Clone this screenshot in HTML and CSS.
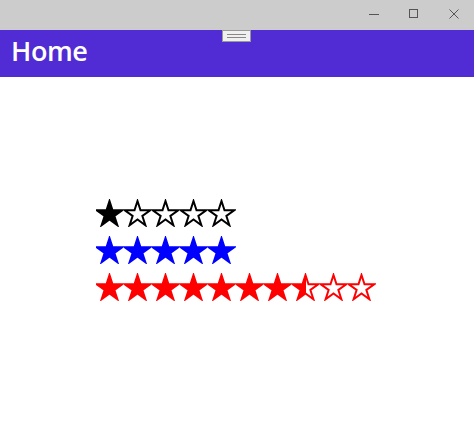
FILE: index.html
```html
<!DOCTYPE html>
<html>
<head>
<meta charset="utf-8">
<link rel="stylesheet" href="styles.css">
</head>
<body>
<svg width="0" height="0" class="defs">
  <defs>
    <polygon id="star" points="13.5,2 16.51,11.26 26.24,11.26 18.37,16.98 21.38,26.24 13.5,20.52 5.62,26.24 8.63,16.98 0.76,11.26 10.49,11.26"/>
    <linearGradient id="halfred" x1="0" x2="1" y1="0" y2="0">
      <stop offset="50%" stop-color="#ff0000"/>
      <stop offset="50%" stop-color="#ffffff"/>
    </linearGradient>
  </defs>
</svg>
<div class="titlebar">
  <div class="winbtn">
    <svg width="12" height="12" viewBox="0 0 12 12"><line x1="1" y1="6.5" x2="11" y2="6.5" stroke="#555" stroke-width="1"/></svg>
  </div>
  <div class="winbtn">
    <svg width="12" height="12" viewBox="0 0 12 12"><rect x="1.5" y="1.5" width="8" height="8" fill="none" stroke="#555" stroke-width="1"/></svg>
  </div>
  <div class="winbtn">
    <svg width="12" height="12" viewBox="0 0 12 12"><path d="M1.5 1.5 L10.5 10.5 M10.5 1.5 L1.5 10.5" stroke="#555" stroke-width="1"/></svg>
  </div>
</div>
<div class="header">
  <div class="handle"><span></span><span></span></div>
  <h1 class="title">Home</h1>
</div>
<div class="content">
  <div class="rating">
    <svg class="star" viewBox="0 0 28 28"><use href="#star" fill="#000" stroke="#000" stroke-width="2"/></svg>
    <svg class="star" viewBox="0 0 28 28"><use href="#star" fill="#fff" stroke="#000" stroke-width="2"/></svg>
    <svg class="star" viewBox="0 0 28 28"><use href="#star" fill="#fff" stroke="#000" stroke-width="2"/></svg>
    <svg class="star" viewBox="0 0 28 28"><use href="#star" fill="#fff" stroke="#000" stroke-width="2"/></svg>
    <svg class="star" viewBox="0 0 28 28"><use href="#star" fill="#fff" stroke="#000" stroke-width="2"/></svg>
  </div>
  <div class="rating">
    <svg class="star" viewBox="0 0 28 28"><use href="#star" fill="#0000ff" stroke="#0000ff" stroke-width="2"/></svg>
    <svg class="star" viewBox="0 0 28 28"><use href="#star" fill="#0000ff" stroke="#0000ff" stroke-width="2"/></svg>
    <svg class="star" viewBox="0 0 28 28"><use href="#star" fill="#0000ff" stroke="#0000ff" stroke-width="2"/></svg>
    <svg class="star" viewBox="0 0 28 28"><use href="#star" fill="#0000ff" stroke="#0000ff" stroke-width="2"/></svg>
    <svg class="star" viewBox="0 0 28 28"><use href="#star" fill="#0000ff" stroke="#0000ff" stroke-width="2"/></svg>
  </div>
  <div class="rating">
    <svg class="star" viewBox="0 0 28 28"><use href="#star" fill="#ff0000" stroke="#ff0000" stroke-width="2"/></svg>
    <svg class="star" viewBox="0 0 28 28"><use href="#star" fill="#ff0000" stroke="#ff0000" stroke-width="2"/></svg>
    <svg class="star" viewBox="0 0 28 28"><use href="#star" fill="#ff0000" stroke="#ff0000" stroke-width="2"/></svg>
    <svg class="star" viewBox="0 0 28 28"><use href="#star" fill="#ff0000" stroke="#ff0000" stroke-width="2"/></svg>
    <svg class="star" viewBox="0 0 28 28"><use href="#star" fill="#ff0000" stroke="#ff0000" stroke-width="2"/></svg>
    <svg class="star" viewBox="0 0 28 28"><use href="#star" fill="#ff0000" stroke="#ff0000" stroke-width="2"/></svg>
    <svg class="star" viewBox="0 0 28 28"><use href="#star" fill="#ff0000" stroke="#ff0000" stroke-width="2"/></svg>
    <svg class="star" viewBox="0 0 28 28"><use href="#star" fill="url(#halfred)" stroke="#ff0000" stroke-width="2"/></svg>
    <svg class="star" viewBox="0 0 28 28"><use href="#star" fill="#fff" stroke="#ff0000" stroke-width="2"/></svg>
    <svg class="star" viewBox="0 0 28 28"><use href="#star" fill="#fff" stroke="#ff0000" stroke-width="2"/></svg>
  </div>
</div>
</body>
</html>
```
FILE: styles.css
```css
html, body {
  margin: 0;
  padding: 0;
  background: #ffffff;
  font-family: "Open Sans", "Noto Sans", sans-serif;
}
.defs {
  position: absolute;
  width: 0;
  height: 0;
}
.titlebar {
  height: 30px;
  background: #cccccc;
  display: flex;
  justify-content: flex-end;
  align-items: center;
}
.winbtn {
  width: 40px;
  height: 30px;
  display: flex;
  align-items: center;
  justify-content: center;
}
.winbtn svg {
  display: block;
  margin-top: -2px;
}
.header {
  position: relative;
  height: 47px;
  background: #512bd4;
  display: flex;
  align-items: center;
}
.handle {
  position: absolute;
  left: 222px;
  top: 0;
  width: 27px;
  height: 10px;
  background: #f0f0f0;
  border: 1px solid #999999;
  display: flex;
  flex-direction: column;
  justify-content: center;
  align-items: center;
  gap: 2px;
}
.handle span {
  display: block;
  width: 19px;
  height: 1px;
  background: #888888;
}
.title {
  margin: 0 0 0 11px;
  color: #ffffff;
  font-size: 27px;
  font-weight: 600;
  letter-spacing: -0.4px;
  line-height: 1;
  padding-bottom: 6px;
}
.content {
  display: flex;
  flex-direction: column;
  gap: 9px;
  padding: 122px 0 0 96px;
}
.rating {
  display: flex;
  height: 28px;
}
.star {
  width: 28px;
  height: 28px;
  display: block;
}
```
